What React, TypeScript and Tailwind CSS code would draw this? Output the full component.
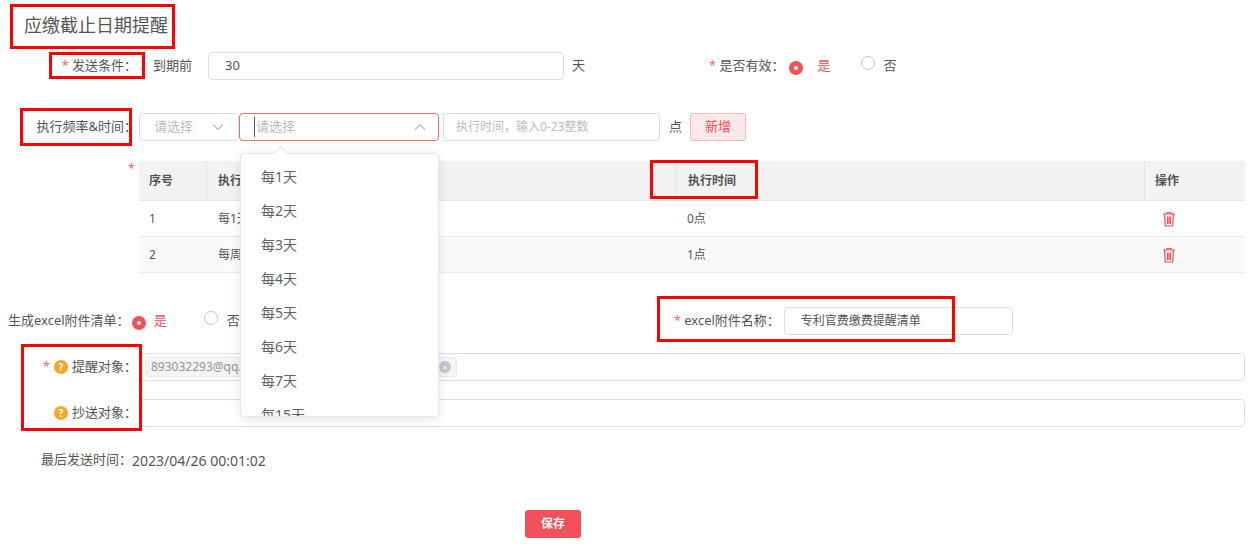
import React from "react";

const font = { fontFamily: '"Noto Sans", "Noto Sans CJK SC", sans-serif' };

function Radio({ on }: { on?: boolean }) {
  return on ? (
    <span className="inline-flex w-[14px] h-[14px] rounded-full bg-[#f0515a] items-center justify-center">
      <span className="w-[4px] h-[4px] rounded-full bg-white" />
    </span>
  ) : (
    <span className="inline-block w-[14px] h-[14px] rounded-full border border-[#c0c4cc] bg-white" />
  );
}

function Trash() {
  return (
    <svg width="14" height="16" viewBox="0 0 14 16" fill="none" stroke="#f0515a" strokeWidth="1.2">
      <path d="M1 3h12M5 3V1.5h4V3M2.5 3l.8 12h7.4l.8-12M5.5 5.5v7.5M7 5.5v7.5M8.5 5.5v7.5" />
    </svg>
  );
}

function Help() {
  return (
    <span className="inline-flex w-[14px] h-[14px] rounded-full bg-[#f5a623] text-white text-[10px] font-bold items-center justify-center leading-none">?</span>
  );
}

function Box({ c }: { c: string }) {
  return <div className={`absolute border-[3px] border-[#f00] pointer-events-none ${c}`} />;
}

export default function App() {
  const items = ["每1天", "每2天", "每3天", "每4天", "每5天", "每6天", "每7天", "每15天"];
  return (
    <div className="relative w-[1255px] h-[549px] bg-white text-[13px] text-[#555] overflow-hidden" style={font}>
      <div className="pl-[24px] pt-[12px] h-[52px] text-[18px] text-[#555]">应缴截止日期提醒</div>

      {/* row 1 */}
      <div className="flex items-center h-[28px]">
        <div className="w-[137px] text-right"><span className="text-[#f56c6c]">* </span>发送条件：</div>
        <span className="ml-[16px]">到期前</span>
        <div className="ml-[16px] w-[356px] h-[28px] border border-[#dcdfe6] rounded-[4px] flex items-center pl-[16px]">30</div>
        <span className="ml-[8px]">天</span>
        <span className="ml-[124px]"><span className="text-[#f56c6c]">* </span>是否有效：</span>
        <span className="ml-[4px]"><Radio on /></span>
        <span className="ml-[15px] text-[#f0515a]">是</span>
        <span className="ml-[30px]"><Radio /></span>
        <span className="ml-[9px]">否</span>
      </div>

      {/* row 2 */}
      <div className="flex items-center h-[28px] mt-[33px]">
        <div className="w-[137px] text-right">执行频率&amp;时间：</div>
        <div className="ml-[2px] w-[100px] h-[28px] border border-[#dcdfe6] rounded-[4px] flex items-center justify-between px-[14px] text-[#bbb]">
          <span>请选择</span>
          <svg width="12" height="8" viewBox="0 0 12 8" fill="none" stroke="#bbb" strokeWidth="1.2"><path d="M1 1.5l5 5 5-5" /></svg>
        </div>
        <div className="w-[200px] h-[28px] border border-[#f56c6c] rounded-[4px] flex items-center justify-between pl-[14px] pr-[12px] text-[#bbb]">
          <span className="border-l border-[#555] pl-[1px]">请选择</span>
          <svg width="12" height="8" viewBox="0 0 12 8" fill="none" stroke="#bbb" strokeWidth="1.2"><path d="M1 6.5l5-5 5 5" /></svg>
        </div>
        <div className="ml-[4px] w-[217px] h-[28px] border border-[#dcdfe6] rounded-[4px] flex items-center pl-[12px] text-[12px] text-[#bbb]">执行时间，输入0-23整数</div>
        <span className="ml-[9px]">点</span>
        <div className="ml-[8px] w-[56px] h-[28px] border border-[#f9b4b8] bg-[#fde8e9] rounded-[3px] flex items-center justify-center text-[#f0515a]">新增</div>
      </div>

      {/* table */}
      <div className="flex mt-[20px]">
        <div className="w-[139px] text-right pr-[4px] text-[#f56c6c] -mt-[2px]">*</div>
        <div className="w-[1106px] text-[12px]">
          <div className="flex h-[40px] bg-[#f2f2f2] font-bold text-[#555] items-center border-b border-[#e8e8e8]">
            <div className="w-[68px] pl-[10px] h-full flex items-center border-r border-[#e4e4e4]">序号</div>
            <div className="w-[468px] pl-[11px]">执行频率</div>
            <div className="w-[470px] pl-[12px] h-full flex items-center border-l border-r border-[#e4e4e4]">执行时间</div>
            <div className="pl-[10px]">操作</div>
          </div>
          {[["1", "每1天", "0点"], ["2", "每周一", "1点"]].map((r, i) => (
            <div key={i} className={`flex h-[36px] items-center border-b border-[#ececec] ${i ? "bg-[#fafafa]" : ""}`}>
              <div className="w-[68px] pl-[10px]">{r[0]}</div>
              <div className="w-[468px] pl-[11px]">{r[1]}</div>
              <div className="w-[470px] pl-[12px]">{r[2]}</div>
              <div className="pl-[17px]"><Trash /></div>
            </div>
          ))}
        </div>
      </div>

      {/* excel row */}
      <div className="flex items-center h-[28px] mt-[34px]">
        <span className="ml-[8px]">生成excel附件清单：</span>
        <span className="ml-[2px]"><Radio on /></span>
        <span className="ml-[8px] text-[#f0515a]">是</span>
        <span className="ml-[37px]"><Radio /></span>
        <span className="ml-[9px]">否</span>
        <span className="ml-[434px]"><span className="text-[#f56c6c]">* </span>excel附件名称：</span>
        <div className="ml-[4px] w-[229px] h-[28px] border border-[#dcdfe6] rounded-[4px] flex items-center pl-[16px] text-[12px]">专利官费缴费提醒清单</div>
      </div>

      {/* 提醒对象 */}
      <div className="flex items-center h-[28px] mt-[18px]">
        <div className="w-[137px] flex items-center justify-end gap-[4px]">
          <span className="text-[#f56c6c]">*</span><Help /><span>提醒对象：</span>
        </div>
        <div className="ml-[2px] w-[1106px] h-[28px] border border-[#dcdfe6] rounded-[4px] flex items-center pl-[5px]">
          <div className="w-[312px] h-[20px] bg-[#f4f4f5] border border-[#e9e9eb] rounded-[3px] flex items-center justify-between px-[5px] text-[12px] text-[#909399]">
            <span>893032293@qq.com</span>
            <span className="w-[12px] h-[12px] rounded-full bg-[#c0c4cc] text-white text-[9px] flex items-center justify-center leading-none">×</span>
          </div>
        </div>
      </div>
      <div className="flex items-center h-[28px] mt-[18px]">
        <div className="w-[137px] flex items-center justify-end gap-[4px]">
          <Help /><span>抄送对象：</span>
        </div>
        <div className="ml-[2px] w-[1106px] h-[28px] border border-[#dcdfe6] rounded-[4px]" />
      </div>

      <div className="flex items-center mt-[23px] h-[20px] text-[14px]">
        <span className="ml-[41px] text-[13px]">最后发送时间：</span>
        <span>2023/04/26 00:01:02</span>
      </div>

      <div className="mt-[40px] ml-[525px] w-[56px] h-[28px] bg-[#f0515a] rounded-[3px] text-white font-bold text-[12px] flex items-center justify-center">保存</div>

      {/* dropdown */}
      <div className="absolute left-[240px] top-[153px] w-[199px] h-[264px] bg-white border border-[#e4e7ed] rounded-[4px] shadow-[0_2px_12px_rgba(0,0,0,0.1)] overflow-hidden text-[14px] text-[#606266]">
        <div className="pt-[5px]">
          {items.map((t, i) => (
            <div key={i} className="h-[34px] flex items-center pl-[20px]">{t}</div>
          ))}
        </div>
      </div>
      <div className="absolute left-[276px] top-[148px] w-[10px] h-[10px] bg-white border-l border-t border-[#e4e7ed] rotate-45" />

      {/* annotations */}
      <Box c="left-[10px] top-[4px] w-[165px] h-[45px]" />
      <Box c="left-[49px] top-[52px] w-[96px] h-[27px]" />
      <Box c="left-[20px] top-[108px] w-[112px] h-[38px]" />
      <Box c="left-[650px] top-[160px] w-[108px] h-[39px]" />
      <Box c="left-[657px] top-[296px] w-[298px] h-[46px]" />
      <Box c="left-[21px] top-[344px] w-[121px] h-[87px]" />
    </div>
  );
}
